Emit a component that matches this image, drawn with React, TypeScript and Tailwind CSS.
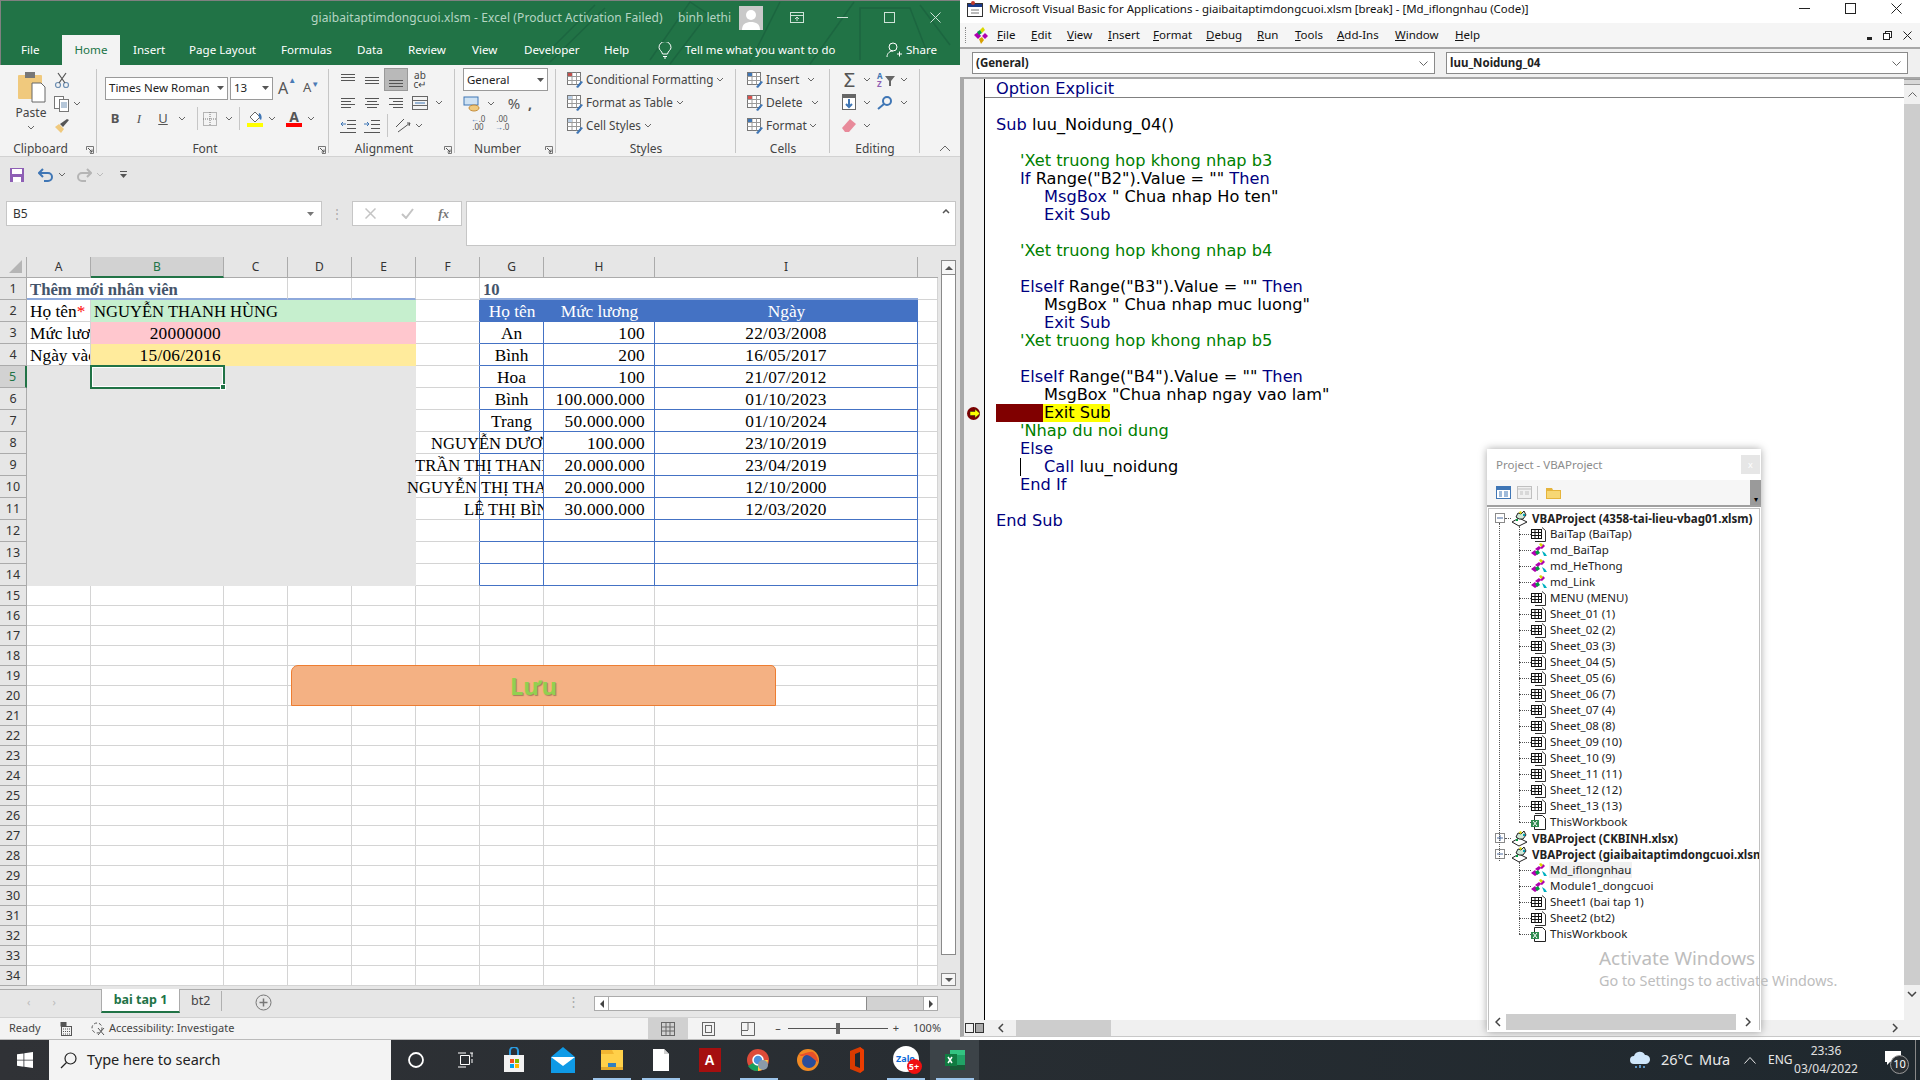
import React from "react";

const Chev = ({ c = "#666" }: { c?: string }) => (
  <svg width="8" height="5" viewBox="0 0 8 5" fill="none"><path d="M1 1l3 3 3-3" stroke={c} strokeWidth="1" /></svg>
);
const Lines = ({ rows, w = 16, h = 16, c = "#555" }: { rows: number[][]; w?: number; h?: number; c?: string }) => (
  <svg width={w} height={h} viewBox={`0 0 ${w} ${h}`} fill="none">
    {rows.map((r, i) => <path key={i} d={`M${r[0]} ${r[2]}.5H${r[1]}`} stroke={c} />)}
  </svg>
);
const Launcher = () => (
  <svg width="8" height="8" viewBox="0 0 8 8" fill="none"><path d="M.5 4V.5H7.5V7.5H4" stroke="#777" /><path d="M2 2l4 4M6 3.5V6H3.5" stroke="#555" /></svg>
);
const Sep = () => <div className="w-px h-[23px] bg-[#c6c6c6]" />;

const Group = ({ w, label, launcher, children }: { w: string; label: string; launcher?: boolean; children: React.ReactNode }) => (
  <div className={`${w} flex flex-col relative h-[92px] shrink-0`}>
    <div className="flex-1 min-h-0">{children}</div>
    <div className={`h-[16px] flex items-center justify-center text-[12px] text-[#444] leading-none pb-[1px] ${launcher ? "pr-[16px]" : ""}`}>{label}</div>
    {launcher && <div className="absolute right-[3px] bottom-[3px]"><Launcher /></div>}
    <div className="absolute right-0 top-[4px] bottom-[4px] w-px bg-[#c6c6c6]" />
  </div>
);
const Cell24 = ({ children, cls = "" }: { children: React.ReactNode; cls?: string }) => (
  <div className={`w-[24px] h-[23px] flex items-center justify-center ${cls}`}>{children}</div>
);

const GridIcon = ({ accent = "#c0504d" }: { accent?: string }) => (
  <svg width="16" height="16" viewBox="0 0 16 16" fill="none">
    <rect x=".5" y=".5" width="13" height="12" fill="#fff" stroke="#777" />
    <path d="M.5 4.5h13M.5 8.5h13M5 .5v12M9.5 .5v12" stroke="#9a9a9a" />
    <rect x="1" y="1" width="4" height="3" fill={accent} />
    <path d="M9 15l5-6 2 1-5 6z" fill="#3f76b5" />
  </svg>
);

const TitleBar = () => (
  <div className="h-[65px] bg-[#217346] text-white flex flex-col relative overflow-hidden shadow-[inset_1px_1px_0_#808080]">
    <svg className="absolute right-0 top-0" width="440" height="65" viewBox="0 0 440 65" fill="none" stroke="#1c6640" strokeWidth="1.5">
      <path d="M20 60L75 5M30 62L85 8M130 60l40-58 18 12-38 50M230 62l30-60M290 64l44-62M340 60V8h50l20 52M400 5l30 40" />
    </svg>
    <div className="h-[35px] relative flex items-center text-[12px] text-[#b5d5c3]">
      <div className="w-[311px] shrink-0" />
      <span className="w-[367px] shrink-0 tracking-[0.1px] whitespace-nowrap">giaibaitaptimdongcuoi.xlsm  -  Excel (Product Activation Failed)</span>
      <span className="w-[61px] shrink-0 whitespace-nowrap">binh lethi</span>
      <div className="w-[24px] h-[24px] bg-[#c9c9c9] flex items-end justify-center shrink-0 overflow-hidden">
        <svg width="22" height="22" viewBox="0 0 22 22" fill="#fff"><circle cx="11" cy="7" r="5" /><path d="M2 22c0-6 4-8 9-8s9 2 9 8z" /></svg>
      </div>
      <div className="w-[22px] shrink-0" />
      <svg width="24" height="14" viewBox="0 0 24 14" fill="none" stroke="#cfe3d8"><rect x="5.5" y="1.5" width="13" height="10" /><path d="M5.5 4.5h13M12 10V6M10 8l2-2 2 2" /></svg>
      <div className="w-[28px] shrink-0" />
      <svg width="11" height="11" viewBox="0 0 11 11" stroke="#cfe3d8"><path d="M0 5.5h11" /></svg>
      <div className="w-[36px] shrink-0" />
      <svg width="11" height="11" viewBox="0 0 11 11" fill="none" stroke="#cfe3d8"><rect x=".5" y=".5" width="10" height="10" /></svg>
      <div className="w-[35px] shrink-0" />
      <svg width="11" height="11" viewBox="0 0 11 11" stroke="#cfe3d8"><path d="M.5.5l10 10M10.5.5l-10 10" /></svg>
    </div>
    <div className="h-[30px] relative flex items-stretch text-[11.6px]">
      <div className="w-[17px]" />
      <span className="w-[45px] flex items-center pl-[4px]">File</span>
      <span className="w-[58px] bg-[#f3f3f3] text-[#217346] flex items-center justify-center">Home</span>
      <span className="w-[13px]" />
      <span className="w-[56px] flex items-center">Insert</span>
      <span className="w-[92px] flex items-center">Page Layout</span>
      <span className="w-[76px] flex items-center">Formulas</span>
      <span className="w-[51px] flex items-center">Data</span>
      <span className="w-[64px] flex items-center">Review</span>
      <span className="w-[52px] flex items-center">View</span>
      <span className="w-[80px] flex items-center">Developer</span>
      <span className="w-[54px] flex items-center">Help</span>
      <span className="w-[27px] flex items-center">
        <svg width="14" height="17" viewBox="0 0 14 17" fill="none" stroke="#fff"><path d="M4.5 12C4 9 1 8 1 5.5a6 6 0 0 1 12 0C13 8 10 9 9.5 12zM5 14.5h4M6 16h2" /></svg>
      </span>
      <span className="w-[197px] flex items-center whitespace-nowrap text-[11.4px]">Tell me what you want to do</span>
      <span className="w-[20px] flex items-center ml-[4px]">
        <svg width="16" height="16" viewBox="0 0 16 16" fill="none" stroke="#fff"><circle cx="7" cy="5" r="4" /><path d="M1 15c0-4 3-6 6-6M11 12h5M13.500 9.500v5" /></svg>
      </span>
      <span className="flex items-center">Share</span>
    </div>
  </div>
);

const Combo = ({ w, text }: { w: string; text: string }) => (
  <div className={`${w} h-[23px] border border-[#9a9a9a] bg-white flex items-center justify-between px-[3px] font-['Noto_Sans',sans-serif] text-[11.5px] text-[#222] whitespace-nowrap overflow-hidden`}>
    <span>{text}</span>
    <svg width="7" height="4" viewBox="0 0 7 4" fill="#555"><path d="M0 0h7L3.500 4z" /></svg>
  </div>
);

const Ribbon = () => (
  <div className="h-[92px] bg-[#f3f3f3] border-b border-[#d2d2d2] flex text-[#444] relative">
    <Group w="w-[97px]" label="Clipboard" launcher>
      <div className="flex pl-[16px] pt-[6px]">
        <div className="w-[30px] flex flex-col items-center">
          <svg width="30" height="32" viewBox="0 0 30 32" fill="none">
            <rect x="2" y="4" width="24" height="24" rx="1" fill="#f0c97d" />
            <rect x="9" y="1" width="10" height="6" fill="#777" />
            <path d="M16 12h9l4 4v15H16z" fill="#fff" stroke="#666" />
          </svg>
          <span className="text-[12px] leading-[14px] mt-[3px]">Paste</span>
          <div className="mt-[5px]"><Chev /></div>
        </div>
        <div className="ml-[8px] flex flex-col gap-[6px] pt-[1px]">
          <svg width="16" height="17" viewBox="0 0 16 17" fill="none" stroke="#6d8fb3" strokeWidth="1.2"><circle cx="4" cy="13" r="2.500" /><circle cx="12" cy="13" r="2.500" /><path d="M5 11L12 1M11 11L4 1" stroke="#555" /></svg>
          <div className="flex items-center gap-[3px]">
            <svg width="16" height="17" viewBox="0 0 16 17" fill="none" stroke="#777"><rect x=".5" y="1.500" width="9" height="12" fill="#fff" /><rect x="5.500" y="4.500" width="9" height="12" fill="#fff" /><path d="M7 8h6M7 10h6M7 12h6" stroke="#6d8fb3" /></svg>
            <Chev />
          </div>
          <svg width="16" height="16" viewBox="0 0 16 16"><path d="M1 9l6 6 3-4-5-5z" fill="#f0c97d" /><path d="M6 6l3 3 6-7-2-1z" fill="#555" /></svg>
        </div>
      </div>
    </Group>
    <Group w="w-[232px]" label="Font" launcher>
      <div className="pl-[8px] pt-[11px]">
        <div className="flex items-center">
          <Combo w="w-[123px]" text="Times New Roman" />
          <div className="w-[2px]" />
          <Combo w="w-[43px]" text="13" />
          <div className="w-[24px] flex justify-center ml-[2px] text-[16px] text-[#555]">A<span className="text-[8px] text-[#4a7ab5] -mt-[2px]">▲</span></div>
          <div className="w-[24px] flex justify-center text-[13px] text-[#555]">A<span className="text-[8px] text-[#4a7ab5]">▼</span></div>
        </div>
        <div className="flex items-center mt-[7px] h-[23px] -ml-[2px] text-[#555]">
          <span className="w-[24px] text-center font-bold text-[13px]">B</span>
          <span className="w-[24px] text-center italic text-[13px] font-['Liberation_Serif',serif]">I</span>
          <span className="w-[24px] text-center underline text-[13px]">U</span>
          <div className="w-[14px] flex justify-center"><Chev /></div>
          <div className="w-[8px]" />
          <Sep />
          <div className="w-[5px]" />
          <svg width="14" height="14" viewBox="0 0 14 14" fill="none" stroke="#777" strokeDasharray="1 1"><rect x=".5" y=".5" width="13" height="13" /><path d="M7 0v14M0 7h14" /></svg>
          <div className="w-[16px] flex justify-center ml-[4px]"><Chev /></div>
          <div className="w-[2px]" />
          <Sep />
          <div className="w-[7px]" />
          <div className="flex flex-col items-center w-[16px]">
            <svg width="16" height="12" viewBox="0 0 16 12" fill="none"><path d="M3 6l5-5 5 5-5 5z" fill="#fff" stroke="#666" /><path d="M12 2c3 1 3 5 2 7-2-1-3-4-2-7z" fill="#3f76b5" /></svg>
            <div className="w-[16px] h-[4px] bg-[#ffff00]" />
          </div>
          <div className="w-[18px] flex justify-center"><Chev /></div>
          <div className="flex flex-col items-center w-[16px] ml-[5px]">
            <span className="text-[14px] leading-[13px] font-bold text-[#555]">A</span>
            <div className="w-[16px] h-[4px] bg-[#ff0000]" />
          </div>
          <div className="w-[18px] flex justify-center"><Chev /></div>
        </div>
      </div>
    </Group>
    <Group w="w-[126px]" label="Alignment" launcher>
      <div className="pl-[7px] pt-[3px]">
        <div className="flex">
          <Cell24><Lines rows={[[1, 15, 2], [1, 15, 5], [1, 15, 8]]} /></Cell24>
          <Cell24><Lines rows={[[1, 15, 5], [1, 15, 8], [1, 15, 11]]} /></Cell24>
          <Cell24 cls="bg-[#b9b9b9] border border-[#999]"><Lines rows={[[1, 15, 8], [1, 15, 11], [1, 15, 14]]} /></Cell24>
          <Cell24><span className="text-[10px] leading-[9px] text-center w-[16px]">ab<br />c↵</span></Cell24>
        </div>
        <div className="flex items-center">
          <Cell24><Lines rows={[[1, 15, 3], [1, 11, 6], [1, 15, 9], [1, 11, 12]]} /></Cell24>
          <Cell24><Lines rows={[[1, 15, 3], [3, 13, 6], [1, 15, 9], [3, 13, 12]]} /></Cell24>
          <Cell24><Lines rows={[[1, 15, 3], [5, 15, 6], [1, 15, 9], [5, 15, 12]]} /></Cell24>
          <Cell24><svg width="16" height="16" viewBox="0 0 16 16" fill="none" stroke="#666"><rect x=".5" y="1.500" width="15" height="13" /><path d="M.5 5.500h15M.5 10.500h15" /><path d="M3 8h10" stroke="#3f76b5" /></svg></Cell24>
          <div className="w-[14px] flex justify-center"><Chev /></div>
        </div>
        <div className="flex items-center">
          <Cell24><svg width="16" height="14" viewBox="0 0 16 14" fill="none" stroke="#555"><path d="M7 1.500h9M7 5.500h9M7 9.500h9M0 13.500h16" /><path d="M6 5H1M3 3L1 5l2 2" stroke="#3f76b5" /></svg></Cell24>
          <Cell24><svg width="16" height="14" viewBox="0 0 16 14" fill="none" stroke="#555"><path d="M7 1.500h9M7 5.500h9M7 9.500h9M0 13.500h16" /><path d="M0 5h5M3 3l2 2-2 2" stroke="#3f76b5" /></svg></Cell24>
          <div className="w-[3px]" />
          <Sep />
          <div className="w-[7px]" />
          <svg width="16" height="16" viewBox="0 0 16 16" fill="none" stroke="#555"><path d="M1 9L9 1M3 14L15 5M12 5l3 0-1 3" /></svg>
          <div className="w-[16px] flex justify-center"><Chev /></div>
        </div>
      </div>
    </Group>
    <Group w="w-[101px]" label="Number" launcher>
      <div className="pl-[8px] pt-[3px]">
        <Combo w="w-[85px]" text="General" />
        <div className="flex items-center mt-[1px] h-[23px]">
          <svg width="18" height="16" viewBox="0 0 18 16" fill="none"><rect x="1" y="1" width="14" height="8" fill="#cfe2f3" stroke="#3f76b5" /><ellipse cx="11" cy="12" rx="5" ry="3" fill="#f0c97d" stroke="#c58d3a" /></svg>
          <div className="w-[16px] flex justify-center ml-[2px]"><Chev /></div>
          <span className="ml-[6px] text-[15px] text-[#555] w-[18px] text-center">%</span>
          <span className="ml-[5px] text-[14px] font-bold text-[#555] leading-none">,</span>
        </div>
        <div className="flex items-center text-[8px] leading-[8px] text-[#555]">
          <span className="w-[26px] text-center pl-[4px]"><span className="text-[#3f76b5]">←</span>.0<br />.00</span>
          <span className="w-[26px] text-center">.00<br /><span className="text-[#3f76b5]">→</span>.0</span>
        </div>
      </div>
    </Group>
    <Group w="w-[180px]" label="Styles">
      <div className="pl-[11px] pt-[3px] text-[11.7px] text-[#444]">
        {[["Conditional Formatting", "#c0504d"], ["Format as Table", "#bcd0e6"], ["Cell Styles", "#bcd0e6"]].map(([t, c]) => (
          <div key={t} className="h-[23px] flex items-center gap-[3px] whitespace-nowrap">
            <GridIcon accent={c} />
            <span>{t}</span>
            <Chev />
          </div>
        ))}
      </div>
    </Group>
    <Group w="w-[94px]" label="Cells">
      <div className="pl-[11px] pt-[3px] text-[12px] text-[#444]">
        {[["Insert", "w-[3px]", "#3f76b5"], ["Delete", "w-[7px]", "#d9534f"], ["Format", "w-[5px]", "#3f76b5"]].map(([t, g, c]) => (
          <div key={t} className="h-[23px] flex items-center whitespace-nowrap">
            <GridIcon accent={c} />
            <span className="ml-[3px] w-[38px]">{t}</span>
            <div className={g} />
            <Chev />
          </div>
        ))}
      </div>
    </Group>
    <Group w="w-[90px]" label="Editing">
      <div className="pl-[11px] pt-[3px]">
        <div className="h-[23px] flex items-center">
          <span className="w-[17px] text-[20px] leading-none text-[#555] text-center">Σ</span>
          <div className="w-[18px] flex justify-center"><Chev /></div>
          <svg width="20" height="17" viewBox="0 0 20 17"><text x="1" y="8" fontSize="8" fontWeight="700" fill="#3f76b5" fontFamily="Noto Sans">A</text><text x="1" y="16" fontSize="8" fontWeight="700" fill="#8e5fb5" fontFamily="Noto Sans">Z</text><path d="M9 5h10l-4 5v5h-2v-5z" fill="#666" /></svg>
          <div className="w-[16px] flex justify-center"><Chev /></div>
        </div>
        <div className="h-[23px] flex items-center">
          <svg width="17" height="17" viewBox="0 0 17 17" fill="none"><rect x="1.500" y=".5" width="13" height="15" fill="#fff" stroke="#666" /><rect x="2" y="1" width="12" height="3" fill="#666" /><path d="M8 5v8M5 10l3 3 3-3" stroke="#3f76b5" strokeWidth="2" /></svg>
          <div className="w-[18px] flex justify-center"><Chev /></div>
          <svg width="20" height="16" viewBox="0 0 20 16" fill="none" stroke="#3f76b5" strokeWidth="2"><circle cx="11" cy="6" r="4" /><path d="M8 9l-6 5" /></svg>
          <div className="w-[16px] flex justify-center"><Chev /></div>
        </div>
        <div className="h-[23px] flex items-center">
          <svg width="17" height="15" viewBox="0 0 17 15"><path d="M1 10l8-9 6 5-7 8H4z" fill="#e88a9a" /></svg>
          <div className="w-[18px] flex justify-center"><Chev /></div>
        </div>
      </div>
    </Group>
    <div className="flex-1 relative">
      <svg className="absolute left-[19px] bottom-[4px]" width="12" height="7" viewBox="0 0 12 7" fill="none" stroke="#666"><path d="M1 6l5-5 5 5" /></svg>
    </div>
  </div>
);

const Qat = () => (
  <div className="h-[35px] flex items-center pl-[10px] bg-[#e6e6e6]">
    <svg width="14" height="14" viewBox="0 0 14 14"><path d="M0 0h14v14H0z" fill="#8e5fb5" /><rect x="2" y="1" width="10" height="5" fill="#fff" /><rect x="3" y="9" width="8" height="5" fill="#fff" /></svg>
    <svg className="ml-[14px]" width="16" height="14" viewBox="0 0 16 14" fill="none" stroke="#3f76b5" strokeWidth="2"><path d="M1 5h9a4 4 0 0 1 0 8H6M5 1L1 5l4 4" /></svg>
    <div className="ml-[4px]"><Chev /></div>
    <svg className="ml-[10px]" width="16" height="14" viewBox="0 0 16 14" fill="none" stroke="#b5b5b5" strokeWidth="2"><path d="M15 5H6a4 4 0 0 0 0 8h4M11 1l4 4-4 4" /></svg>
    <div className="ml-[4px]"><Chev c="#bbb" /></div>
    <svg className="ml-[16px]" width="7" height="8" viewBox="0 0 7 8" fill="#555"><path d="M0 0h7v1H0zM0 3h7L3.500 7z" /></svg>
  </div>
);

const FormulaBar = () => (
  <div className="h-[65px] bg-[#e6e6e6] flex pt-[9px] items-start">
    <div className="ml-[6px] w-[316px] h-[25px] bg-white border border-[#c6c6c6] flex items-center justify-between pl-[6px] pr-[7px] text-[12px] text-[#333]">
      <span>B5</span>
      <svg width="7" height="4" viewBox="0 0 7 4" fill="#777"><path d="M0 0h7L3.500 4z" /></svg>
    </div>
    <div className="w-[30px] h-[25px] flex items-center justify-center text-[#aaa] text-[12px] leading-none">⋮</div>
    <div className="w-[110px] h-[25px] bg-white border border-[#c6c6c6] flex items-center justify-between px-[12px]">
      <svg width="11" height="11" viewBox="0 0 11 11" stroke="#c4c4c4" strokeWidth="1.500"><path d="M.5.5l10 10M10.500.5l-10 10" /></svg>
      <svg width="13" height="11" viewBox="0 0 13 11" fill="none" stroke="#c4c4c4" strokeWidth="2"><path d="M1 6l4 4 7-9" /></svg>
      <span className="font-['Liberation_Serif',serif] italic text-[13px] text-[#777] font-bold">fx</span>
    </div>
    <div className="ml-[4px] w-[490px] h-[45px] bg-white border border-[#c6c6c6] flex justify-end pr-[5px] pt-[7px]">
      <svg width="8" height="5" viewBox="0 0 8 5" fill="none" stroke="#555" strokeWidth="1.500"><path d="M1 4l3-3 3 3" /></svg>
    </div>
  </div>
);

const COLS = ["A", "B", "C", "D", "E", "F", "G", "H", "I", ""];
const TABLE: [string, string, string][] = [
  ["An", "100", "22/03/2008"],
  ["Bình", "200", "16/05/2017"],
  ["Hoa", "100", "21/07/2012"],
  ["Bình", "100.000.000", "01/10/2023"],
  ["Trang", "50.000.000", "01/10/2024"],
  ["", "100.000", "23/10/2019"],
  ["", "20.000.000", "23/04/2019"],
  ["", "20.000.000", "12/10/2000"],
  ["", "30.000.000", "12/03/2020"],
  ["", "", ""],
  ["", "", ""],
  ["", "", ""],
];

const serif = "font-['Liberation_Serif',serif] text-[17.33px] leading-[23px] text-black";
const serifCaps = "font-['Liberation_Serif',serif] text-[16.6px] leading-[23px] text-black";
const digits = "tracking-[0.25px]";
const titleCls = "font-['Liberation_Serif',serif] font-bold text-[16.7px] leading-[23px] text-[#44546a]";
const GL = "border-r border-b border-[#d4d4d4]";

const Spill = ({ w, text }: { w: string; text: string }) => (
  <div className={`absolute right-0 top-0 h-[21px] ${w} overflow-hidden whitespace-nowrap ${serifCaps}`}>{text}</div>
);

function sheetCell(r: number, c: number) {
  const k = `${r}-${c}`;
  if (r === 1) {
    if (c === 0) return <div key={k} className={`col-span-2 border-b-2 border-[#8ea9db] pl-[3px] ${titleCls} whitespace-nowrap`}>Thêm mới nhân viên</div>;
    if (c === 1) return null;
    if (c === 5 || c === 9) return <div key={k} className={GL} />;
    if (c === 6) return <div key={k} className={`col-span-3 border-b-2 border-[#8ea9db] pl-[3px] ${titleCls}`}>10</div>;
    if (c === 7 || c === 8) return null;
    return <div key={k} className="border-r border-b-2 border-r-[#d4d4d4] border-b-[#8ea9db]" />;
  }
  if (r === 2) {
    if (c === 0) return <div key={k} className={`${GL} ${serif} pl-[3px] overflow-hidden whitespace-nowrap`}>Họ tên<span className="text-[#ff0000]">*</span></div>;
    if (c === 1) return <div key={k} className={`col-span-4 bg-[#c6efce] pl-[3px] ${serifCaps} whitespace-nowrap`}>NGUYỄN THANH HÙNG</div>;
    if (c >= 2 && c <= 4) return null;
    if (c === 5) return <div key={k} className="border-r border-b border-r-[#4472c4] border-b-[#d4d4d4]" />;
    if (c >= 6 && c <= 8) return <div key={k} className="bg-[#4472c4] font-['Liberation_Serif',serif] text-[17.33px] leading-[23px] text-white text-center">{["Họ tên", "Mức lương", "Ngày"][c - 6]}</div>;
    return <div key={k} className={GL} />;
  }
  if (r === 3 || r === 4) {
    if (c === 0) return <div key={k} className={`${GL} ${serif} pl-[3px] overflow-hidden whitespace-nowrap`}>{r === 3 ? "Mức lương" : "Ngày vào làm"}</div>;
    if (c === 1) return <div key={k} className={`${r === 3 ? "bg-[#ffc7ce]" : "bg-[#ffeb9c]"} ${serif} ${digits} text-right pr-[3px]`}>{r === 3 ? "20000000" : "15/06/2016"}</div>;
    if (c >= 2 && c <= 4) return <div key={k} className={r === 3 ? "bg-[#ffc7ce]" : "bg-[#ffeb9c]"} />;
  }
  if (r >= 5 && c <= 4 && r <= 14) {
    if (r === 5 && c === 1)
      return (
        <div key={k} className="relative bg-[#e6e6e6]">
          <div className="absolute -left-[1px] -top-[1px] -right-[1px] -bottom-[1px] border-2 border-[#217346] shadow-[inset_0_0_0_1px_#fff]" />
          <div className="absolute -right-[2px] -bottom-[2px] w-[6px] h-[6px] bg-[#217346] border border-white" />
        </div>
      );
    return <div key={k} className="bg-[#e6e6e6]" />;
  }
  if (r >= 3 && r <= 14 && c >= 5 && c <= 8) {
    const B = "border-r border-b border-[#4472c4]";
    if (c === 5) return <div key={k} className="border-r border-b border-r-[#4472c4] border-b-[#d4d4d4]" />;
    const row = TABLE[r - 3];
    if (c === 6) {
      const sp: Record<number, [string, string]> = {
        8: ["w-[112px]", "NGUYỄN DƯƠNG"],
        9: ["w-[128px]", "TRẦN THỊ THANH"],
        10: ["w-[136px]", "NGUYỄN THỊ THANH"],
        11: ["w-[79px]", "LÊ THỊ BÌNH"],
      };
      return (
        <div key={k} className={`${B} ${serif} text-center relative`}>
          {row[0]}
          {sp[r] && <Spill w={sp[r][0]} text={sp[r][1]} />}
        </div>
      );
    }
    if (c === 7) return <div key={k} className={`${B} ${serif} ${digits} text-right pr-[9px]`}>{row[1]}</div>;
    return <div key={k} className={`${B} ${serif} ${digits} text-center`}>{row[2]}</div>;
  }
  return <div key={k} className={GL} />;
}

const Sheet = () => {
  const rows = Array.from({ length: 34 }, (_, i) => i + 1);
  return (
    <div className="relative h-[732px] bg-[#e6e6e6] flex">
      <div className="grid grid-cols-[27px_64px_133px_64px_64px_64px_64px_64px_111px_263px_20px] grid-rows-[21px_repeat(14,22px)_repeat(20,20px)] w-[938px] h-[729px] bg-white text-[#333]">
        <div className="bg-[#e6e6e6] border-r border-b border-[#ababab] flex items-end justify-end p-[4px]">
          <svg width="13" height="13" viewBox="0 0 13 13" fill="#b5b5b5"><path d="M13 0v13H0z" /></svg>
        </div>
        {COLS.map((h, i) => (
          <div key={i} className={`flex items-center justify-center text-[12px] border-r border-[#ababab] ${i === 1 ? "bg-[#d2d2d2] border-b-2 border-b-[#217346] text-[#217346]" : "bg-[#e6e6e6] border-b text-[#333]"} ${i === 9 ? "border-r-0" : ""}`}>{h}</div>
        ))}
        {rows.map((r) => (
          <React.Fragment key={r}>
            <div className={`flex items-center justify-center pt-[2px] text-[12.5px] border-b border-[#ababab] ${r === 5 ? "bg-[#d2d2d2] border-r-2 border-r-[#217346] text-[#217346]" : "bg-[#e6e6e6] border-r text-[#333]"}`}>{r}</div>
            {COLS.map((_, c) => sheetCell(r, c))}
          </React.Fragment>
        ))}
      </div>
      <div className="w-[15px] ml-[3px] mt-[3px] flex flex-col">
        <div className="h-[15px] bg-[#f6f6f6] border border-[#8a8a8a] flex items-center justify-center"><svg width="8" height="4" viewBox="0 0 8 4" fill="#555"><path d="M4 0l4 4H0z" /></svg></div>
        <div className="h-[680px] bg-white border border-t-0 border-[#8a8a8a]" />
        <div className="flex-1" />
        <div className="h-[13px] bg-[#f6f6f6] border border-[#8a8a8a] flex items-center justify-center mb-[3px]"><svg width="8" height="4" viewBox="0 0 8 4" fill="#555"><path d="M0 0h8L4 4z" /></svg></div>
      </div>
      <div className="absolute left-[291px] top-[408px] w-[485px] h-[41px] bg-[#f4b183] border border-[#ed7d31] rounded-tl-[7px] rounded-tr-[5px] flex items-center justify-center text-[24px] font-bold text-[#92d050] [text-shadow:1px_1px_1px_#a97d5c] font-['Noto_Sans',sans-serif]">Lưu</div>
    </div>
  );
};

const TabBar = () => (
  <div className="h-[28px] bg-[#e6e6e6] border-t border-[#ababab] flex text-[12.5px]">
    <div className="w-[101px] flex items-center pl-[27px] gap-[22px] text-[#bbb] text-[11px] pb-[3px]"><span>‹</span><span>›</span></div>
    <div className="w-[79px] h-[24px] bg-white border-x border-[#ababab] border-b-2 border-b-[#217346] -mt-px flex items-center justify-center font-bold text-[#217346]">bai tap 1</div>
    <div className="w-[42px] h-[20px] mt-[1px] border-r border-[#b0b0b0] flex items-center pl-[11px] text-[#444]">bt2</div>
    <div className="w-[82px] flex items-center justify-center pb-[3px]">
      <svg width="17" height="17" viewBox="0 0 17 17" fill="none" stroke="#777"><circle cx="8.500" cy="8.500" r="7.500" /><path d="M8.500 4.500v8M4.500 8.500h8" strokeWidth="1.500" /></svg>
    </div>
    <div className="w-[290px] flex items-center justify-end pr-[14px] pb-[3px] text-[#aaa] leading-none">⋮</div>
    <div className="w-[344px] h-[15px] mt-[6px] bg-[#d2d2d2] border border-[#ababab] flex items-stretch">
      <div className="w-[14px] bg-white border-r border-[#ababab] flex items-center justify-center"><svg width="4" height="8" viewBox="0 0 4 8" fill="#444"><path d="M4 0v8L0 4z" /></svg></div>
      <div className="w-[258px] bg-white border-r border-[#8a8a8a]" />
      <div className="flex-1" />
      <div className="w-[14px] bg-white border-l border-[#ababab] flex items-center justify-center"><svg width="4" height="8" viewBox="0 0 4 8" fill="#444"><path d="M0 0v8l4-4z" /></svg></div>
    </div>
  </div>
);

const StatusBar = () => (
  <div className="h-[23px] bg-[#f3f3f3] border-t border-[#d2d2d2] flex items-center text-[11px] text-[#444] border-b border-b-[#bbb]">
    <span className="w-[60px] pl-[9px]">Ready</span>
    <svg width="14" height="14" viewBox="0 0 14 14" fill="none" stroke="#555"><rect x="1.500" y="4.500" width="10" height="9" /><path d="M3 7h7M3 9.500h7M3 12h7" strokeDasharray="1 1" /><rect x="1" y="0" width="5" height="4" fill="#555" /></svg>
    <div className="w-[16px]" />
    <svg width="16" height="16" viewBox="0 0 16 16" fill="none" stroke="#555"><circle cx="7" cy="7" r="5" strokeDasharray="3 2" /><path d="M8 7l6 7M14 7l-6 7" /></svg>
    <span className="ml-[3px] whitespace-nowrap w-[127px]">Accessibility: Investigate</span>
    <div className="w-[412px]" />
    <div className="w-[40px] h-[21px] bg-[#d0d0d0] flex items-center justify-center"><svg width="14" height="14" viewBox="0 0 14 14" fill="none" stroke="#666"><rect x=".5" y=".5" width="13" height="13" /><path d="M5 0v14M9 0v14M0 5h14M0 9h14" /></svg></div>
    <div className="w-[40px] flex justify-center"><svg width="13" height="14" viewBox="0 0 13 14" fill="none" stroke="#666"><rect x=".5" y=".5" width="12" height="13" /><rect x="3.500" y="3.500" width="6" height="7" /></svg></div>
    <div className="w-[40px] flex justify-center"><svg width="14" height="14" viewBox="0 0 14 14" fill="none" stroke="#666"><path d="M.5.500h13v13H.5zM7 0v8M0 8.500h7" /></svg></div>
    <div className="w-[20px] text-center">–</div>
    <div className="w-[100px] h-px bg-[#555] relative"><div className="absolute left-[48px] -top-[5px] w-[4px] h-[11px] bg-[#666]" /></div>
    <div className="w-[16px] text-center">+</div>
    <div className="ml-[9px]">100%</div>
  </div>
);

const Excel = () => (
  <div className="w-[960px] shrink-0 flex flex-col font-['Noto_Sans',sans-serif]">
    <TitleBar />
    <Ribbon />
    <Qat />
    <FormulaBar />
    <Sheet />
    <TabBar />
    <StatusBar />
  </div>
);

type Seg = [string, "k" | "t" | "c"];
const K = (s: string): Seg => [s, "k"];
const T = (s: string): Seg => [s, "t"];
const C = (s: string): Seg => [s, "c"];
const CODE: { ind: number; segs: Seg[] }[] = [
  { ind: 0, segs: [K("Sub "), T("luu_Noidung_04()")] },
  { ind: 0, segs: [] },
  { ind: 1, segs: [C("'Xet truong hop khong nhap b3")] },
  { ind: 1, segs: [K("If "), T('Range("B2").Value = "" '), K("Then")] },
  { ind: 2, segs: [K("MsgBox "), T('" Chua nhap Ho ten"')] },
  { ind: 2, segs: [K("Exit Sub")] },
  { ind: 0, segs: [] },
  { ind: 1, segs: [C("'Xet truong hop khong nhap b4")] },
  { ind: 0, segs: [] },
  { ind: 1, segs: [K("ElseIf "), T('Range("B3").Value = "" '), K("Then")] },
  { ind: 2, segs: [T('MsgBox " Chua nhap muc luong"')] },
  { ind: 2, segs: [K("Exit Sub")] },
  { ind: 1, segs: [C("'Xet truong hop khong nhap b5")] },
  { ind: 0, segs: [] },
  { ind: 1, segs: [K("ElseIf "), T('Range("B4").Value = "" '), K("Then")] },
  { ind: 2, segs: [T('MsgBox "Chua nhap ngay vao lam"')] },
];
const CODE2: { ind: number; segs: Seg[] }[] = [
  { ind: 1, segs: [C("'Nhap du noi dung")] },
  { ind: 1, segs: [K("Else")] },
  { ind: 2, segs: [K("Call "), T("luu_noidung")] },
  { ind: 1, segs: [K("End If")] },
  { ind: 0, segs: [] },
  { ind: 0, segs: [K("End Sub")] },
];
const segCls = { k: "text-[#000080]", t: "text-black", c: "text-[#008000]" };
const indCls = ["pl-[11px]", "pl-[35px]", "pl-[59px]"];

const CodeLine = ({ ind, segs }: { ind: number; segs: Seg[] }) => (
  <div className={`h-[18px] leading-[18px] whitespace-pre ${indCls[ind]}`}>
    {segs.map((s, i) => <span key={i} className={segCls[s[1]]}>{s[0]}</span>)}
  </div>
);

const SheetIco = () => (
  <svg width="16" height="15" viewBox="0 0 16 15" fill="none"><path d="M11 .5l3.500 3v11H4" stroke="#333" fill="#fff" /><rect x=".5" y="2.500" width="10" height="9" fill="#fff" stroke="#111" /><path d="M.5 5.500h10M.5 8.500h10M4 2.500v9M7.500 2.500v9" stroke="#111" /></svg>
);
const ModIco = () => (
  <svg width="16" height="14" viewBox="0 0 16 14"><path d="M0 10l4-3 3 4-3 2zM4 6l4-3 2 2-3 3zM9 5l3-4 2 2-3 3z" fill="#b000b0" /><path d="M4 9l3-2 2 3-3 2z" fill="#00a040" /><path d="M8 1l2-1 2 2-2 2z" fill="#d8d800" /><path d="M11 8l3 2 2 3-3 0z" fill="#00b0c0" /></svg>
);
const ProjIco = () => (
  <svg className="shrink-0" width="17" height="17" viewBox="0 0 17 17" fill="none"><path d="M1 12l7-4 8 4-8 4z" fill="#fff" stroke="#222" /><path d="M5 7l2-4 3 1 3-3 2 4-3 4-4 0z" fill="#cfe8d8" stroke="#222" /><path d="M8 2l2-1 1 2-2 1z" fill="#d8d800" /><path d="M12 4l2 0 0 2-2 0z" fill="#00a0b0" /><path d="M5 9l2 0 0 2-2 0z" fill="#00a040" /></svg>
);
const WbIco = () => (
  <svg width="16" height="15" viewBox="0 0 16 15" fill="none"><path d="M3.500.5h8l3 3v11h-11z" fill="#fff" stroke="#222" /><path d="M0 5h8v7H0z" fill="#2e8b4f" /><path d="M2 6l4 5M6 6l-4 5" stroke="#fff" /></svg>
);

const TreeRow = ({ kind, text, sel }: { kind: "s" | "m" | "w"; text: string; sel?: boolean }) => (
  <div className="h-[16px] flex items-center pl-[30px]">
    <div className="w-[12px] border-t border-dotted border-[#555]" />
    <div className="w-[16px] flex justify-center">{kind === "s" ? <SheetIco /> : kind === "m" ? <ModIco /> : <WbIco />}</div>
    <span className={`ml-[2px] px-[1px] h-[16px] leading-[15px] whitespace-nowrap ${sel ? "bg-[#f0f0f0]" : ""}`}>{text}</span>
  </div>
);
const ProjRow = ({ text, plus }: { text: string; plus?: boolean }) => (
  <div className="h-[16px] flex items-center pl-[6px]">
    <svg className="shrink-0" width="10" height="10" viewBox="0 0 10 10" fill="#fff" stroke="#8a8a8a"><rect x=".5" y=".5" width="9" height="9" /><path d="M2 5h6" stroke="#4a6aa0" />{plus && <path d="M5 2v6" stroke="#4a6aa0" />}</svg>
    <div className="w-[6px] shrink-0 border-t border-dotted border-[#555]" />
    <ProjIco />
    <span className="ml-[4px] font-bold text-[11.55px] leading-[15px] whitespace-nowrap">{text}</span>
  </div>
);

const ProjectPanel = () => {
  const sheets = ["01 (1)", "02 (2)", "03 (3)", "04 (5)", "05 (6)", "06 (7)", "07 (4)", "08 (8)", "09 (10)", "10 (9)", "11 (11)", "12 (12)", "13 (13)"];
  return (
    <div className="absolute left-[527px] top-[449px] w-[274px] h-[583px] bg-white flex flex-col shadow-[0_0_8px_rgba(0,0,0,0.35)] font-['Noto_Sans',sans-serif]">
      <div className="h-[31px] flex items-center justify-between pl-[9px] pr-[1px] text-[11.5px] text-[#8c8c8c]">
        <span>Project - VBAProject</span>
        <div className="w-[19px] h-[19px] bg-[#e6e6e6] text-white text-[9px] flex items-center justify-center">x</div>
      </div>
      <div className="h-[27px] bg-[#f6f6f6] border-b-2 border-[#a0a0a0] flex items-center pl-[9px] relative">
        <svg width="15" height="13" viewBox="0 0 15 13" fill="none"><rect x=".5" y=".5" width="14" height="12" fill="#fff" stroke="#3f76b5" /><rect x="1" y="1" width="13" height="3" fill="#3f76b5" /><path d="M3 6h3M3 8h3M3 10h3M8 6h4M8 8h4M8 10h4" stroke="#3f76b5" /></svg>
        <svg className="ml-[6px]" width="15" height="13" viewBox="0 0 15 13" fill="none"><rect x=".5" y=".5" width="14" height="12" fill="#f0f0f0" stroke="#c0c0c0" /><path d="M1 3h13M3 6h3M3 8h3M8 6h4M8 8h4" stroke="#c0c0c0" /></svg>
        <div className="w-px h-[14px] bg-[#c8c8c8] ml-[5px]" />
        <svg className="ml-[8px]" width="15" height="12" viewBox="0 0 15 12"><path d="M0 1h6l1 2h8v9H0z" fill="#e5b43c" /><path d="M1 4h13v7H1z" fill="#f7d774" /></svg>
        <div className="absolute right-0 top-0 w-[11px] h-full bg-[#9a9a9a] flex items-end justify-center text-[8px] text-black leading-[12px]">▾</div>
      </div>
      <div className="flex-1 mx-[1px] mt-[1px] border-x border-t border-[#c0c0c0] relative overflow-hidden pt-[1px] text-[11.5px] text-[#222]">
        <div className="absolute left-[10px] top-[14px] h-[338px] border-l border-dotted border-[#555]" />
        <ProjRow text="VBAProject (4358-tai-lieu-vbag01.xlsm)" />
        <div className="relative">
          <div className="absolute left-[30px] top-0 h-[296px] border-l border-dotted border-[#555]" />
          <TreeRow kind="s" text="BaiTap (BaiTap)" />
          <TreeRow kind="m" text="md_BaiTap" />
          <TreeRow kind="m" text="md_HeThong" />
          <TreeRow kind="m" text="md_Link" />
          <TreeRow kind="s" text="MENU (MENU)" />
          {sheets.map((s) => <TreeRow key={s} kind="s" text={`Sheet_${s}`} />)}
          <TreeRow kind="w" text="ThisWorkbook" />
        </div>
        <ProjRow text="VBAProject (CKBINH.xlsx)" plus />
        <ProjRow text="VBAProject (giaibaitaptimdongcuoi.xlsm" />
        <div className="relative">
          <div className="absolute left-[30px] top-0 h-[72px] border-l border-dotted border-[#555]" />
          <TreeRow kind="m" text="Md_iflongnhau" sel />
          <TreeRow kind="m" text="Module1_dongcuoi" />
          <TreeRow kind="s" text="Sheet1 (bai tap 1)" />
          <TreeRow kind="s" text="Sheet2 (bt2)" />
          <TreeRow kind="w" text="ThisWorkbook" />
        </div>
      </div>
      <div className="h-[17px] mx-[1px] mb-[2px] bg-white flex items-center border-x border-[#c0c0c0]">
        <div className="w-[17px] flex justify-center"><svg width="6" height="10" viewBox="0 0 6 10" fill="none" stroke="#444" strokeWidth="1.500"><path d="M5 1L1 5l4 4" /></svg></div>
        <div className="w-[230px] h-[16px] bg-[#cdcdcd]" />
        <div className="flex-1 flex justify-center"><svg width="6" height="10" viewBox="0 0 6 10" fill="none" stroke="#444" strokeWidth="1.500"><path d="M1 1l4 4-4 4" /></svg></div>
      </div>
    </div>
  );
};

const MENU = ["File", "Edit", "View", "Insert", "Format", "Debug", "Run", "Tools", "Add-Ins", "Window", "Help"];
const MENU_W = ["w-[34px]", "w-[36px]", "w-[41px]", "w-[45px]", "w-[53px]", "w-[51px]", "w-[38px]", "w-[42px]", "w-[58px]", "w-[60px]", "w-[40px]"];

const VbaDrop = ({ w, text }: { w: string; text: string }) => (
  <div className={`${w} h-[22px] bg-white border border-[#8a8a8a] flex items-center justify-between pl-[3px] pr-[6px] text-[11.5px] font-bold text-[#222]`}>
    <span>{text}</span>
    <svg width="9" height="5" viewBox="0 0 9 5" fill="none" stroke="#666"><path d="M.5.5l4 4 4-4" /></svg>
  </div>
);

const Vba = () => (
  <div className="flex-1 flex flex-col bg-[#f0f0f0] relative font-['Noto_Sans',sans-serif] text-[#111] min-w-0">
    <div className="h-[23px] bg-white flex items-center text-[11.45px] pb-[6px]">
      <svg className="ml-[7px]" width="16" height="16" viewBox="0 0 16 16" fill="none"><rect x=".5" y="2.500" width="15" height="13" fill="#fff" stroke="#333" /><rect x="1" y="3" width="14" height="3" fill="#1a3a8a" /><circle cx="6" cy="2" r="2" fill="#c0392b" /><path d="M4 9h8M4 12h8" stroke="#777" /></svg>
      <span className="ml-[6px] whitespace-nowrap">Microsoft Visual Basic for Applications - giaibaitaptimdongcuoi.xlsm [break] - [Md_iflongnhau (Code)]</span>
      <div className="flex-1" />
      <svg width="11" height="11" viewBox="0 0 11 11" stroke="#222"><path d="M0 5.500h11" /></svg>
      <svg className="ml-[35px]" width="11" height="11" viewBox="0 0 11 11" fill="none" stroke="#222"><rect x=".5" y=".5" width="10" height="10" /></svg>
      <svg className="ml-[35px] mr-[18px]" width="11" height="11" viewBox="0 0 11 11" stroke="#222"><path d="M.5.5l10 10M10.500.5l-10 10" /></svg>
    </div>
    <div className="h-[26px] bg-[#f5f5f5] flex items-center text-[11.5px] border-b-2 border-[#a8a8a8]">
      <div className="w-[7px] ml-[5px] mr-[1px] h-[16px] border-l border-dotted border-[#888]" />
      <svg width="17" height="17" viewBox="0 0 17 17"><path d="M1 8l4-3 3 4-3 3z" fill="#b000b0" /><path d="M7 3l3-3 2 3-3 3z" fill="#d8d800" /><path d="M9 9l3-3 3 3-3 3z" fill="#b000b0" /><path d="M6 12l3-2 2 3-3 4z" fill="#d8a000" /><path d="M4 5l3-2 2 3-3 2z" fill="#00a040" /></svg>
      <div className="w-[7px]" />
      {MENU.map((m, i) => (
        <span key={m} className={`${MENU_W[i]} shrink-0 whitespace-nowrap`}><span className="underline">{m[0]}</span>{m.slice(1)}</span>
      ))}
      <div className="flex-1" />
      <div className="w-[5px] h-[3px] bg-[#222] mt-[6px]" />
      <svg className="ml-[11px]" width="9" height="9" viewBox="0 0 9 9" fill="#fff" stroke="#222"><rect x="2.500" y=".5" width="6" height="6" /><rect x=".5" y="2.500" width="6" height="6" /></svg>
      <svg className="ml-[11px] mr-[8px]" width="9" height="9" viewBox="0 0 9 9" stroke="#222"><path d="M.5.5l8 8M8.500.5l-8 8" /></svg>
    </div>
    <div className="h-[28px] flex items-center pl-[12px] gap-[11px]">
      <VbaDrop w="w-[463px]" text="(General)" />
      <VbaDrop w="w-[462px]" text="luu_Noidung_04" />
    </div>
    <div className="flex-1 flex min-h-0 border-t-2 border-l-[4px] border-[#a8a8a8]">
      <div className="w-[21px] bg-[#f0f0f0] border-r border-black flex flex-col shrink-0 relative">
        <svg className="absolute left-[3px] top-[328px]" width="15" height="13" viewBox="0 0 15 13"><circle cx="6.500" cy="6.500" r="6.500" fill="#7a0000" /><path d="M3 4.500h5V2l5 4.500L8 11V8.500H3z" fill="#ffff00" stroke="#222" strokeWidth=".5" /></svg>
      </div>
      <div className="flex-1 bg-white flex flex-col min-w-0 font-['DejaVu_Sans',sans-serif] text-[16.2px]">
        <div className="h-[19px] border-b border-[#808080] leading-[18px] pl-[11px] text-[#000080] pt-[1px]">Option Explicit</div>
        <div className="h-[18px]" />
        {CODE.map((l, i) => <CodeLine key={i} {...l} />)}
        <div className="h-[18px] leading-[18px] whitespace-pre flex pl-[11px]">
          <div className="w-[47px] bg-[#800000]" />
          <div className="w-[67px] bg-[#ffff00] text-black pl-[1px] overflow-hidden">Exit Sub</div>
        </div>
        {CODE2.map((l, i) => (
          <div key={i} className="relative">
            {i === 2 && <div className="absolute left-[35px] top-0 w-px h-[18px] bg-black" />}
            <CodeLine {...l} />
          </div>
        ))}
      </div>
      <div className="w-[16px] bg-[#f0f0f0] flex flex-col shrink-0 relative">
        <div className="h-[6px] bg-[#d8d8d8] border-y border-[#9a9a9a]" />
        <div className="h-[19px] flex items-center justify-center"><svg width="9" height="5" viewBox="0 0 9 5" fill="none" stroke="#666"><path d="M.5 4.500l4-4 4 4" /></svg></div>
        <div className="flex-1 bg-[#cdcdcd]" />
        <div className="h-[18px] flex items-center justify-center"><svg width="10" height="6" viewBox="0 0 10 6" fill="none" stroke="#444" strokeWidth="1.500"><path d="M1 1l4 4 4-4" /></svg></div>
        <div className="h-[17px]" />
      </div>
    </div>
    <div className="h-[17px] bg-[#f0f0f0] flex items-center border-l-[4px] border-[#a8a8a8] border-b border-b-[#c8c8c8]">
      <div className="w-[21px] flex gap-px px-[1px]"><div className="w-[9px] h-[10px] border border-[#333]" /><div className="w-[9px] h-[10px] border border-[#333] bg-[#aaa]" /></div>
      <div className="w-[31px] flex justify-center"><svg width="6" height="10" viewBox="0 0 6 10" fill="none" stroke="#444" strokeWidth="1.500"><path d="M5 1L1 5l4 4" /></svg></div>
      <div className="w-[95px] h-[16px] bg-[#cdcdcd]" />
      <div className="flex-1" />
      <div className="w-[28px] flex"><svg width="6" height="10" viewBox="0 0 6 10" fill="none" stroke="#444" strokeWidth="1.500"><path d="M1 1l4 4-4 4" /></svg></div>
    </div>
    <div className="h-[3px] bg-white" />
    <ProjectPanel />
    <div className="absolute left-[639px] top-[944px] text-[18.9px] leading-[28px] text-[#bdbdbd] whitespace-nowrap">Activate Windows</div>
    <div className="absolute left-[639px] top-[971px] text-[14.4px] leading-[20px] text-[#bdbdbd] whitespace-nowrap">Go to Settings to activate Windows.</div>
  </div>
);

const Under = ({ w = "w-[38px]" }: { w?: string }) => <div className={`absolute bottom-0 left-1/2 -translate-x-1/2 h-[2px] ${w} bg-[#9cc4ea]`} />;
const TB = ({ children, mark, cls = "" }: { children: React.ReactNode; mark?: boolean; cls?: string }) => (
  <div className={`w-[49px] h-[40px] flex items-center justify-center relative shrink-0 ${cls}`}>
    {children}
    {mark && <Under />}
  </div>
);

const Taskbar = () => (
  <div className="h-[40px] bg-linear-to-r from-[#303236] to-[#1f282e] flex items-center font-['Noto_Sans',sans-serif] relative">
    <div className="w-[49px] flex justify-center">
      <svg width="16" height="16" viewBox="0 0 16 16" fill="#fff"><path d="M0 2.300l6.500-.9v6.300H0zM7.300 1.300L16 0v7.700H7.300zM0 8.400h6.500v6.300L0 13.700zM7.300 8.400H16V16l-8.700-1.200z" /></svg>
    </div>
    <div className="w-[342px] h-[40px] bg-[#f3f3f3] flex items-center pl-[11px] text-[14.5px] text-[#222]">
      <svg width="17" height="17" viewBox="0 0 17 17" fill="none" stroke="#222" strokeWidth="1.200"><circle cx="10.500" cy="6.500" r="5.500" /><path d="M6.500 10.500L1 16" /></svg>
      <span className="ml-[10px] whitespace-nowrap">Type here to search</span>
    </div>
    <TB><svg width="16" height="16" viewBox="0 0 16 16" fill="none" stroke="#fff" strokeWidth="1.800"><circle cx="8" cy="8" r="7" /></svg></TB>
    <TB><svg width="16" height="16" viewBox="0 0 16 16" fill="none" stroke="#fff"><path d="M3.500 3.500h9v9h-9zM1 1h8M1 15h8M15 1v4M15 7v4M13 1h3" /></svg></TB>
    <TB><svg width="24" height="26" viewBox="0 0 24 26"><path d="M2 8h20v17H2z" fill="#f2f2f2" /><path d="M8 8V4a4 4 0 0 1 8 0v4" fill="none" stroke="#2a9be0" strokeWidth="2" /><path d="M8 12h4v4H8z" fill="#f25022" /><path d="M13 12h4v4h-4z" fill="#7fba00" /><path d="M8 17h4v4H8z" fill="#00a4ef" /><path d="M13 17h4v4h-4z" fill="#ffb900" /></svg></TB>
    <TB><svg width="24" height="26" viewBox="0 0 24 26"><path d="M0 10L12 0l12 10v16H0z" fill="#0f9ae6" /><path d="M0 10l12 9 12-9" fill="#fff" /></svg></TB>
    <TB mark><svg width="24" height="24" viewBox="0 0 24 24"><path d="M1 2h22v20H1z" fill="#ffd04a" /><path d="M1 2h11l2 4H1z" fill="#f2b632" /><path d="M8 15h8v7H8z" fill="#2f7fc1" /><path d="M1 19h22v3H1z" fill="#e3a92b" /></svg></TB>
    <TB mark><svg width="18" height="24" viewBox="0 0 18 24"><path d="M1 1h11l5 5v17H1z" fill="#fff" /><path d="M12 1l5 5h-5z" fill="#d0d0d0" /></svg></TB>
    <TB><div className="w-[22px] h-[24px] bg-[#a50f0f] flex items-center justify-center text-white font-bold text-[14px] font-['Liberation_Sans',sans-serif]">A</div></TB>
    <TB mark><svg width="26" height="26" viewBox="0 0 26 26"><circle cx="12" cy="13" r="11" fill="#dd4b39" /><path d="M12 13L2 19a11 11 0 0 0 10 5z" fill="#16a05d" /><path d="M12 13l10 0a11 11 0 0 1-10 11z" fill="#ffcd40" /><circle cx="12" cy="13" r="5" fill="#4a90d9" stroke="#fff" strokeWidth="1.500" /><circle cx="17" cy="18" r="5" fill="#8a9aa8" /></svg></TB>
    <TB><svg width="24" height="24" viewBox="0 0 24 24"><circle cx="12" cy="12" r="11" fill="#f08a24" /><circle cx="13" cy="13" r="7" fill="#2a4d9b" /><path d="M3 6c3 2 8-3 14-2 4 3 5 7 5 10-4-2-6-6-11-7-3 0-6 3-8-1z" fill="#e8502a" /></svg></TB>
    <TB><svg width="20" height="26" viewBox="0 0 20 26"><path d="M3 4l10-4 4 3v20l-4 3-10-4z" fill="#d83b01" /><path d="M8 7l5-2v16l-5-2z" fill="#1f282e" /><path d="M13 0l4 3v20l-4 3z" fill="#eb3c00" /></svg></TB>
    <TB mark><div className="relative w-[26px] h-[26px] rounded-full bg-white flex items-center justify-center text-[9px] font-bold text-[#0b6ad9] -mt-[2px]">Zalo<div className="absolute -right-[3px] -bottom-[2px] w-[15px] h-[15px] rounded-full bg-[#f01010] text-white text-[9px] flex items-center justify-center">5+</div></div></TB>
    <TB mark cls="bg-[#3c4348]"><svg width="22" height="22" viewBox="0 0 22 22"><rect x="6" y="1" width="15" height="20" fill="#21a366" /><path d="M6 1h15v5H6z" fill="#33c481" /><path d="M6 16h15v5H6z" fill="#185c37" /><rect x="1" y="5" width="12" height="12" fill="#107c41" /><path d="M4 8l4 6M8 8l-4 6" stroke="#fff" strokeWidth="1.500" /></svg></TB>
    <div className="flex-1" />
    <svg width="22" height="18" viewBox="0 0 22 18"><path d="M5 13a4 4 0 0 1 0-8 6 6 0 0 1 11-1 4.500 4.500 0 0 1 1 9z" fill="#cfe6fa" /><path d="M7 15v2M11 14v3M15 15v2" stroke="#6cb2ee" strokeWidth="1.500" /></svg>
    <span className="ml-[10px] w-[38px] text-[14.5px] text-[#e8e8e8]">26°C</span>
    <span className="w-[45px] text-[14.500px] text-[#e8e8e8]">Mưa</span>
    <svg width="12" height="7" viewBox="0 0 12 7" fill="none" stroke="#e8e8e8"><path d="M.5 6.500l5.500-6 5.500 6" /></svg>
    <span className="ml-[12px] w-[23px] text-[12px] text-[#e8e8e8] whitespace-nowrap">ENG</span>
    <div className="w-[70px] text-[12px] leading-[18px] text-[#e0e0e0] text-center">23:36<br />03/04/2022</div>
    <div className="w-[54px] relative h-[40px]">
      <svg className="absolute left-[24px] top-[11px]" width="16" height="14" viewBox="0 0 16 14" fill="#fff"><path d="M0 0h16v11H5l-3 3v-3H0z" /></svg>
      <div className="absolute left-[29px] top-[15px] w-[19px] h-[19px] rounded-full bg-[#2a2f33] border border-[#999] text-white text-[11px] flex items-center justify-center">10</div>
    </div>
    <div className="w-px h-[40px] bg-[#888]" />
    <div className="w-[4px]" />
  </div>
);

export default function App() {
  return (
    <div className="w-[1920px] h-[1080px] flex flex-col overflow-hidden bg-white">
      <div className="h-[1040px] flex">
        <Excel />
        <Vba />
      </div>
      <Taskbar />
    </div>
  );
}
